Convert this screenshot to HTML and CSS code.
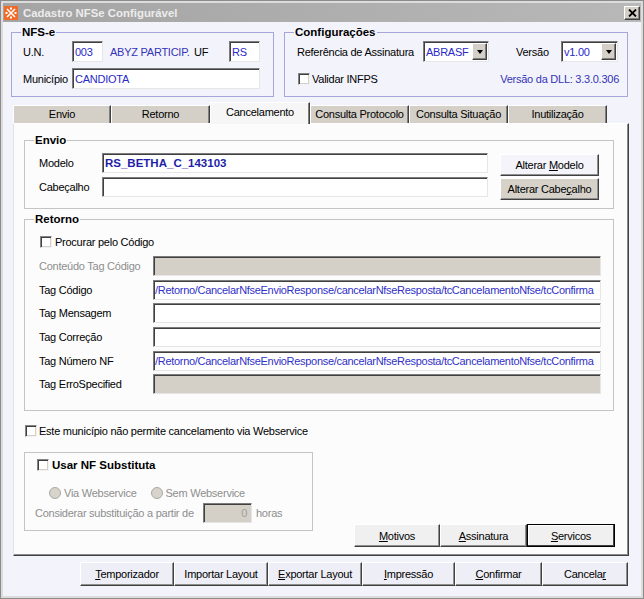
FILE: index.html
```html
<!DOCTYPE html>
<html lang="pt">
<head>
<meta charset="utf-8">
<title>Cadastro NFSe Configurável</title>
<link rel="stylesheet" href="styles.css">
</head>
<body>
<div class="window">
  <div class="titlebar">
    <svg class="appicon" width="14" height="14" viewBox="0 0 14 14">
      <rect width="14" height="14" fill="#f06a28"/>
      <path d="M3 3 L11 11 M11 3 L3 11" stroke="#fff" stroke-width="1.6"/>
      <rect x="6" y="1.5" width="2" height="2" fill="#fff"/>
      <rect x="6" y="10.5" width="2" height="2" fill="#fff"/>
      <rect x="1.5" y="6" width="2" height="2" fill="#fff"/>
      <rect x="10.5" y="6" width="2" height="2" fill="#fff"/>
    </svg>
    <span class="title">Cadastro NFSe Configurável</span>
    <div class="closebtn">
      <svg width="9" height="8" viewBox="0 0 9 8"><path d="M1 0.5 L8 7.5 M8 0.5 L1 7.5" stroke="#000" stroke-width="1.8"/></svg>
    </div>
  </div>
  <div class="client">
    <div class="toprow">
      <div class="group g-nfse">
        <span class="legend">NFS-e</span>
        <div class="row">
          <span class="w-un">U.N.</span>
          <div class="edit e-un">003</div>
          <span class="blue w-abyz">ABYZ PARTICIP.</span>
          <span class="w-uf">UF</span>
          <div class="edit e-uf">RS</div>
        </div>
        <div class="row">
          <span class="w-un">Município</span>
          <div class="edit e-mun">CANDIOTA</div>
        </div>
      </div>
      <div class="group g-cfg">
        <span class="legend">Configurações</span>
        <div class="row">
          <span class="w-ref">Referência de Assinatura</span>
          <div class="edit combo c-ref"><span>ABRASF</span><span class="dd"><span class="arrow"></span></span></div>
          <span class="w-ver">Versão</span>
          <div class="edit combo c-ver"><span>v1.00</span><span class="dd"><span class="arrow"></span></span></div>
        </div>
        <div class="row">
          <span class="chk chk-val"></span><span class="chk-text">Validar INFPS</span>
          <span class="blue dll">Versão da DLL: 3.3.0.306</span>
        </div>
      </div>
    </div>

    <div class="tabs">
      <div class="tab">Envio</div>
      <div class="tab">Retorno</div>
      <div class="tab active">Cancelamento</div>
      <div class="tab">Consulta Protocolo</div>
      <div class="tab">Consulta Situação</div>
      <div class="tab">Inutilização</div>
    </div>

    <div class="page">
      <div class="group g-envio">
        <span class="legend">Envio</span>
        <div class="envio-body">
          <div class="envio-fields">
            <div class="frow">
              <span class="w-envlbl">Modelo</span>
              <div class="edit e-env bold-blue">RS_BETHA_C_143103</div>
            </div>
            <div class="frow">
              <span class="w-envlbl">Cabeçalho</span>
              <div class="edit e-env"></div>
            </div>
          </div>
          <div class="envio-btns">
            <div class="btn btn-alt btn-hot"><span>Alterar <u>M</u>odelo</span></div>
            <div class="btn btn-alt"><span>Alterar Cabe<u>ç</u>alho</span></div>
          </div>
        </div>
      </div>

      <div class="group g-ret">
        <span class="legend">Retorno</span>
        <div class="crow">
          <span class="chk chk-proc"></span><span class="chk-text">Procurar pelo Código</span>
        </div>
        <div class="rfields">
          <div class="frow">
            <span class="w-retlbl disabled">Conteúdo Tag Código</span>
            <div class="edit e-ret e-dis"></div>
          </div>
          <div class="frow">
            <span class="w-retlbl">Tag Código</span>
            <div class="edit e-ret path">/Retorno/CancelarNfseEnvioResponse/cancelarNfseResposta/tcCancelamentoNfse/tcConfirma</div>
          </div>
          <div class="frow">
            <span class="w-retlbl">Tag Mensagem</span>
            <div class="edit e-ret"></div>
          </div>
          <div class="frow">
            <span class="w-retlbl">Tag Correção</span>
            <div class="edit e-ret"></div>
          </div>
          <div class="frow">
            <span class="w-retlbl">Tag Número NF</span>
            <div class="edit e-ret path">/Retorno/CancelarNfseEnvioResponse/cancelarNfseResposta/tcCancelamentoNfse/tcConfirma</div>
          </div>
          <div class="frow">
            <span class="w-retlbl">Tag ErroSpecified</span>
            <div class="edit e-ret e-dis"></div>
          </div>
        </div>
      </div>

      <div class="crow crow-mun">
        <span class="chk"></span><span class="chk-text">Este município não permite cancelamento via Webservice</span>
      </div>

      <div class="lastrow">
        <div class="group g-subst">
          <div class="crow">
            <span class="chk chk-subst"></span><span class="chk-text strong">Usar NF Substituta</span>
          </div>
          <div class="radios">
            <span class="radio"></span><span class="disabled">Via Webservice</span>
            <span class="radio radio2"></span><span class="disabled">Sem Webservice</span>
          </div>
          <div class="consrow">
            <span class="w-cons disabled">Considerar substituição a partir de</span>
            <div class="edit e-hrs e-dis">0</div>
            <span class="horas disabled">horas</span>
          </div>
        </div>
        <div class="pagebtns">
          <div class="btn pb pb-mot"><span><u>M</u>otivos</span></div>
          <div class="btn pb pb-ass"><span><u>A</u>ssinatura</span></div>
          <div class="btn pb pb-srv default"><span><u>S</u>ervicos</span></div>
        </div>
      </div>
    </div>

    <div class="bottombar">
      <div class="btn bb bb-w"><span><u>T</u>emporizador</span></div>
      <div class="btn bb bb-w"><span>Importar Layout</span></div>
      <div class="btn bb bb-w"><span><u>E</u>xportar Layout</span></div>
      <div class="btn bb bb-m"><span><u>I</u>mpressão</span></div>
      <div class="btn bb bb-n"><span><u>C</u>onfirmar</span></div>
      <div class="btn bb bb-s"><span>Cancela<u>r</u></span></div>
    </div>
  </div>
</div>
</body>
</html>
```

FILE: styles.css
```css
* { box-sizing: border-box; }

body {
  margin: 0;
  font-family: "Liberation Sans", Arial, sans-serif;
  font-size: 11px;
  letter-spacing: -0.25px;
  color: #000;
  background: #f3f3fb;
}

.window {
  width: 644px;
  height: 599px;
  border: 1px solid #8c8c8c;
  padding: 2px;
  background: #dcdcdc;
}

/* ---------- title bar ---------- */
.titlebar {
  height: 19px;
  display: flex;
  align-items: center;
  background: linear-gradient(to right, #a4a4a4, #b8b8b8);
}
.appicon { margin-left: 1px; flex: none; }
.title {
  margin-left: 5px;
  font-weight: bold;
  font-size: 11.4px;
  letter-spacing: 0;
  color: #ececec;
}
.closebtn {
  margin-left: auto;
  margin-right: 1px;
  width: 16px;
  height: 14px;
  background: #d4d0c8;
  border: 1px solid;
  border-color: #fff #404040 #404040 #fff;
  box-shadow: inset -1px -1px 0 #808080;
  display: flex;
  align-items: center;
  justify-content: center;
}

/* ---------- client ---------- */
.client {
  height: 574px;
  background: #f3f3fb;
  padding-top: 10px;
  padding-left: 8px;
}

.toprow { display: flex; gap: 10px; }

.group {
  position: relative;
  border: 1px solid #a6a6dc;
}
.legend {
  position: absolute;
  top: -7px;
  left: 9px;
  padding: 0 1px;
  line-height: 13px;
  font-weight: bold;
  font-size: 11.5px;
  letter-spacing: 0;
  background: #f3f3fb;
}

.row { display: flex; align-items: center; height: 21px; }
.row + .row { margin-top: 6px; }

.g-nfse { width: 263px; height: 65px; padding: 8px 0 0 11px; }
.g-cfg { width: 344px; height: 65px; padding: 8px 8px 0 12px; }

.w-un { width: 49px; flex: none; }
.w-abyz { width: 84px; margin-left: 7px; flex: none; }
.w-uf { width: 35px; flex: none; }
.e-un, .e-uf { width: 31px; height: 21px; }
.e-mun { width: 188px; height: 21px; }

.w-ref { width: 126px; flex: none; }
.w-ver { width: 45px; margin-left: 27px; flex: none; }
.c-ref { width: 66px; height: 21px; }
.c-ver { width: 57px; height: 21px; }

.blue { color: #3434b8; }
.dll { margin-left: auto; }

/* ---------- edits ---------- */
.edit {
  flex: none;
  display: flex;
  align-items: center;
  border: 1px solid;
  border-color: #7c7c7c #e6e6e6 #e6e6e6 #7c7c7c;
  box-shadow: inset 1px 1px 0 #404040;
  background: #fff;
  color: #2a2ac8;
  padding-left: 2px;
  white-space: nowrap;
  overflow: hidden;
}
.e-dis { background: #d4d0c8; }
.bold-blue { font-weight: bold; font-size: 11.5px; letter-spacing: 0; color: #1e1ea8; }
.path { padding-left: 1px; color: #3030c8; letter-spacing: -0.3px; }

.combo { padding-right: 1px; }
.combo > span:first-child { flex: 1; }
.dd {
  width: 15px;
  height: 17px;
  flex: none;
  background: #d4d0c8;
  border: 1px solid;
  border-color: #fff #404040 #404040 #fff;
  box-shadow: inset -1px -1px 0 #808080;
  display: flex;
  align-items: center;
  justify-content: center;
}
.arrow {
  width: 0; height: 0;
  border-left: 3.5px solid transparent;
  border-right: 3.5px solid transparent;
  border-top: 4px solid #000;
}

/* ---------- checkbox / radio ---------- */
.chk {
  width: 12px;
  height: 12px;
  flex: none;
  border: 1px solid;
  border-color: #848484 #f2f2f2 #f2f2f2 #848484;
  box-shadow: inset 1px 1px 0 #404040, inset -1px -1px 0 #d4d0c8;
  background: #fff;
}
.chk-text { margin-left: 3px; }
.chk-val { margin-left: 1px; }
.chk-val + .chk-text { margin-left: 2px; }
.strong { font-weight: bold; font-size: 11.5px; letter-spacing: 0; }

.radio {
  width: 12px;
  height: 12px;
  flex: none;
  border-radius: 50%;
  background: #d8d4cc;
  border: 1px solid #a8a8a8;
  margin-right: 3px;
}
.disabled { color: #8e8e8e; }

/* ---------- tabs ---------- */
.tabs {
  display: flex;
  align-items: flex-end;
  height: 21px;
  margin-top: 5px;
  margin-left: 2px;
  position: relative;
  z-index: 1;
}
.tab {
  width: 99px;
  height: 18px;
  flex: none;
  background: #d4d0c8;
  border-top: 1px solid #fff;
  border-left: 1px solid #fff;
  border-right: 1px solid #404040;
  box-shadow: inset -1px 0 0 #808080;
  text-align: center;
  line-height: 17px;
}
.tab:first-child { width: 98px; }
.tab.active {
  width: 100px;
  height: 22px;
  margin-bottom: -1px;
  background: #f6f6f6;
  line-height: 18px;
}

/* ---------- page ---------- */
.page {
  margin-left: 2px;
  width: 616px;
  height: 433px;
  background: #fcfcfc;
  border-top: 1px solid #fff;
  border-left: 1px solid #e2e2e2;
  border-right: 1px solid #404040;
  border-bottom: 1px solid #404040;
  box-shadow: inset -1px -1px 0 #8a8a8a;
  padding: 16px 14px 0 10px;
}
.page .group { border-color: #c4c4c4; }
.page .legend { background: #fcfcfc; }

.frow { display: flex; align-items: center; height: 20px; }

.g-envio { height: 69px; padding: 12px 0 0 14px; }
.envio-body { display: flex; }
.envio-fields { display: flex; flex-direction: column; gap: 4px; }
.w-envlbl { width: 63px; flex: none; }
.e-env { width: 386px; height: 20px; }
.envio-btns {
  margin-left: 12px;
  margin-top: 1px;
  display: flex;
  flex-direction: column;
  gap: 2px;
}

.btn {
  display: flex;
  align-items: center;
  justify-content: center;
  flex: none;
  border: 1px solid;
  border-color: #fff #404040 #404040 #fff;
  box-shadow: inset -1px -1px 0 #909090;
  background: #f0f0f0;
  white-space: nowrap;
}
.btn u { text-decoration: underline; }
.btn-alt { width: 99px; height: 22px; background: #d6d2ca; }
.btn-hot { background: #f4f4fa; }

.g-ret { margin-top: 10px; height: 192px; padding: 16px 11px 0 14px; }
.crow { display: flex; align-items: center; height: 12px; }
.chk-proc { margin-left: 1px; }
.rfields {
  margin-top: 8px;
  display: flex;
  flex-direction: column;
  gap: 3.7px;
}
.w-retlbl { width: 114px; flex: none; }
.e-ret { width: 448px; height: 20px; }

.crow-mun { margin-top: 14px; margin-left: 1px; }
.crow-mun .chk-text { margin-left: 2px; }

.lastrow { display: flex; align-items: flex-start; margin-top: 15px; }
.g-subst { width: 289px; height: 79px; padding: 6px 0 0 10px; flex: none; }
.chk-subst { margin-left: 2px; }
.radios { display: flex; align-items: center; height: 12px; margin-top: 16px; margin-left: 14px; }
.radio2 { margin-left: 14px; }
.consrow { display: flex; align-items: center; height: 20px; margin-top: 4px; }
.w-cons { width: 168px; flex: none; }
.e-hrs { width: 49px; height: 20px; justify-content: flex-end; padding-right: 4px; color: #a0a0a0; }
.horas { margin-left: 4px; }

.pagebtns { display: flex; margin-left: auto; margin-top: 72px; margin-right: -1px; }
.pb { height: 23px; width: 87px; }
.pb-mot { width: 86px; }
.pb-srv { width: 88px; }
.default {
  border: 1px solid #000;
  box-shadow: inset -1px -1px 0 #404040, inset 1px 1px 0 #fff;
}

/* ---------- bottom ---------- */
.bottombar {
  display: flex;
  justify-content: flex-end;
  margin-top: 6px;
  padding-right: 13px;
}
.bb { height: 24px; background: #eeeef6; }
.bb-w { width: 94px; }
.bb-m { width: 93px; }
.bb-n { width: 87px; }
.bb-s { width: 86px; }
```
